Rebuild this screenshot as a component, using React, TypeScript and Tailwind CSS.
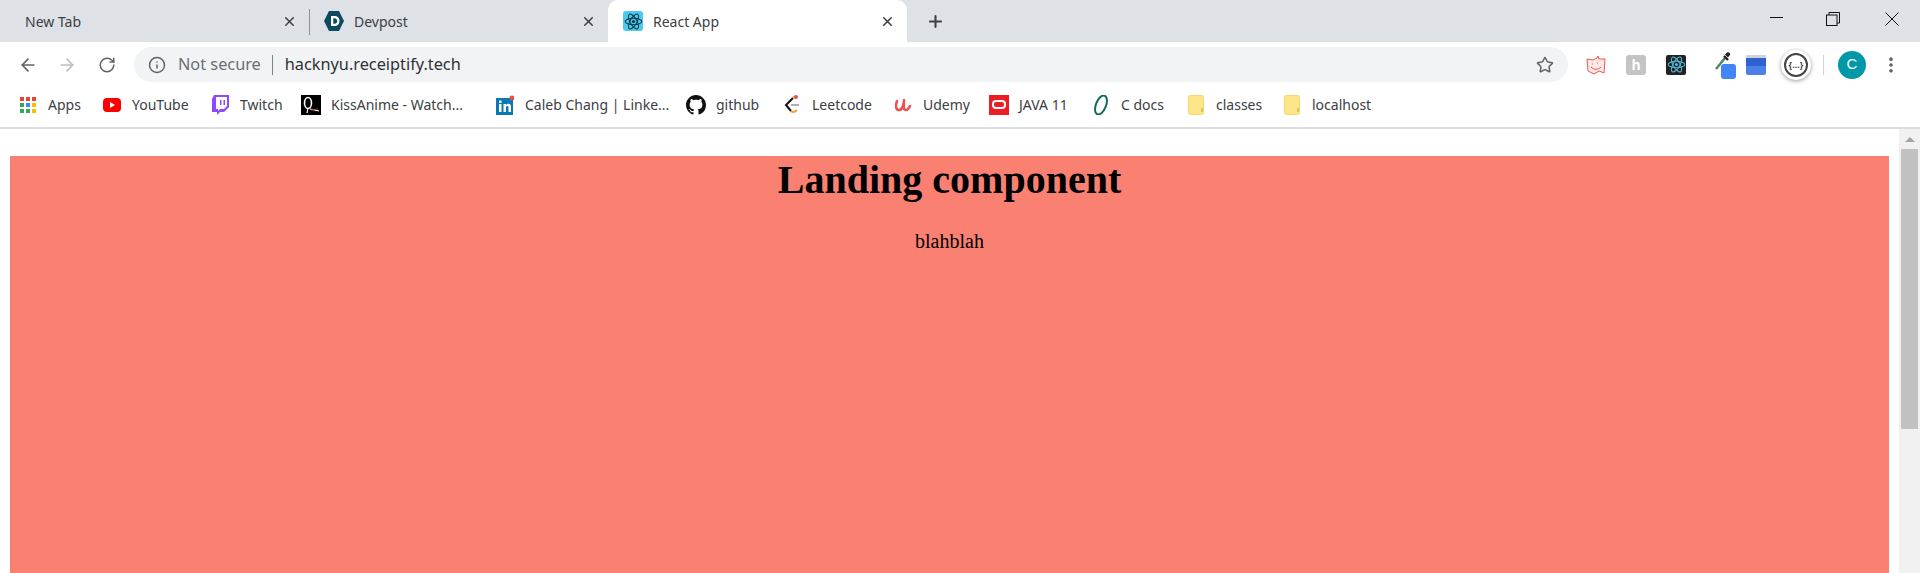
import { ArrowLeft, ArrowRight, Info, MoreVertical, Plus, RotateCw, Star, X } from 'lucide-react';
import type { ReactNode } from 'react';

function ReactLogo({ color = '#61dafb', size = 20 }: { color?: string; size?: number }) {
  return (
    <svg width={size} height={size} viewBox="0 0 24 24" fill="none" stroke={color} strokeWidth={1.3}>
      <circle cx="12" cy="12" r="2" fill={color} stroke="none" />
      <ellipse cx="12" cy="12" rx="10.5" ry="4.2" />
      <ellipse cx="12" cy="12" rx="10.5" ry="4.2" transform="rotate(60 12 12)" />
      <ellipse cx="12" cy="12" rx="10.5" ry="4.2" transform="rotate(120 12 12)" />
    </svg>
  );
}

function AppsIcon() {
  const colors = ['#ea4335', '#ea4335', '#ea4335', '#34a853', '#4285f4', '#fbbc05', '#34a853', '#34a853', '#fbbc05'];
  return (
    <div className="grid grid-cols-3 gap-[2px] w-[16px]">
      {colors.map((c, i) => (
        <span key={i} className="w-[4px] h-[4px]" style={{ backgroundColor: c }} />
      ))}
    </div>
  );
}

function Folder() {
  return (
    <svg width="16" height="20" viewBox="0 0 16 20">
      <rect x="0.5" y="0.5" width="15" height="19" rx="2" fill="#fde68a" stroke="#f5d76e" />
      <rect x="13" y="13" width="2" height="4" fill="#e8c552" />
    </svg>
  );
}

const bookmarks: { label: string; width: string; icon: ReactNode }[] = [
  { label: 'Apps', width: 'w-[84px]', icon: <AppsIcon /> },
  {
    label: 'YouTube',
    width: 'w-[108px]',
    icon: (
      <svg width="18" height="14" viewBox="0 0 18 14">
        <rect width="18" height="14" rx="4" fill="#ff0000" />
        <path d="M7 4l5 3-5 3z" fill="#fff" />
      </svg>
    ),
  },
  {
    label: 'Twitch',
    width: 'w-[91px]',
    icon: (
      <svg width="18" height="20" viewBox="0 0 18 20">
        <path d="M3 0h15v12l-5 5H9l-3 3v-3H1V4z" fill="#9146ff" />
        <path d="M5 2h11v9l-3 3H9l-2 2v-2H5z" fill="#fff" />
        <path d="M9 5h1.5v5H9zM12.5 5H14v5h-1.5z" fill="#9146ff" />
      </svg>
    ),
  },
  {
    label: 'KissAnime - Watch...',
    width: 'w-[194px]',
    icon: (
      <svg width="20" height="20" viewBox="0 0 20 20">
        <rect width="20" height="20" fill="#000" />
        <ellipse cx="7" cy="8" rx="3.5" ry="5.5" fill="none" stroke="#fff" strokeWidth="1.6" />
        <path d="M7 13l-1 5M9 14l9 2" stroke="#fff" strokeWidth="1.2" />
        <path d="M10 15l7-1" stroke="#c0392b" strokeWidth="1" />
      </svg>
    ),
  },
  {
    label: 'Caleb Chang | Linke...',
    width: 'w-[191px]',
    icon: (
      <svg width="18" height="20" viewBox="0 0 18 20">
        <rect y="3" width="17" height="17" fill="#0a78b5" />
        <circle cx="16" cy="3" r="2.5" fill="#e8503a" />
        <path d="M3 9h2.5v8H3zM3 5.5h2.5V8H3zM7.5 9H10v1.2c.6-.9 1.400-1.400 2.500-1.400 2 0 2.500 1.400 2.500 3.400V17h-2.500v-4.300c0-1-.3-1.700-1.200-1.700-1 0-1.300.8-1.300 1.700V17H7.500z" fill="#fff" />
      </svg>
    ),
  },
  {
    label: 'github',
    width: 'w-[96px]',
    icon: (
      <svg width="20" height="20" viewBox="0 0 16 16" fill="#111">
        <path d="M8 0C3.580 0 0 3.580 0 8c0 3.540 2.290 6.530 5.470 7.590.4.070.55-.17.55-.38 0-.19-.01-.82-.01-1.490-2.010.37-2.530-.49-2.690-.94-.09-.23-.48-.94-.82-1.130-.28-.15-.68-.52-.01-.53.630-.01 1.080.58 1.230.82.720 1.210 1.870.87 2.330.66.070-.52.280-.87.510-1.070-1.780-.2-3.640-.89-3.640-3.950 0-.87.310-1.590.820-2.150-.08-.2-.36-1.020.08-2.120 0 0 .67-.21 2.200.82.640-.18 1.320-.27 2-.27s1.360.09 2 .27c1.530-1.040 2.200-.82 2.200-.82.440 1.100.16 1.920.08 2.120.51.560.82 1.270.82 2.150 0 3.070-1.870 3.750-3.650 3.950.29.250.54.730.54 1.480 0 1.070-.01 1.930-.01 2.200 0 .21.150.460.550.380A8.010 8.010 0 0 0 16 8c0-4.420-3.580-8-8-8z" />
      </svg>
    ),
  },
  {
    label: 'Leetcode',
    width: 'w-[111px]',
    icon: (
      <svg width="18" height="20" viewBox="0 0 18 20" fill="none" strokeWidth="2">
        <path d="M10 3L3 10l5 6" stroke="#111" />
        <path d="M8 16c2 2 4 1 6-1" stroke="#f0a030" />
        <path d="M8 10h8" stroke="#b0b0b0" />
        <path d="M10 3l2-2" stroke="#f0a030" />
        <circle cx="13" cy="2" r="2" fill="#d9534f" stroke="none" />
      </svg>
    ),
  },
  {
    label: 'Udemy',
    width: 'w-[96px]',
    icon: (
      <svg width="18" height="18" viewBox="0 0 18 18" fill="none" stroke="#ec5252" strokeWidth="2.6" strokeLinecap="round">
        <path d="M3 5c-2 5-1 9 2 9s5-5 5-10" />
        <path d="M10 8c-1 4 0 6 2 6s3-2 4-4" />
      </svg>
    ),
  },
  {
    label: 'JAVA 11',
    width: 'w-[102px]',
    icon: (
      <div className="w-[20px] h-[20px] bg-[#ed1c24] flex items-center justify-center">
        <div className="w-[14px] h-[9px] rounded-[4px] border-2 border-white" />
      </div>
    ),
  },
  {
    label: 'C docs',
    width: 'w-[95px]',
    icon: (
      <svg width="18" height="20" viewBox="0 0 18 20" fill="none">
        <ellipse cx="9" cy="10" rx="5" ry="10" transform="rotate(22 9 10)" stroke="#0f6b55" strokeWidth="2" />
      </svg>
    ),
  },
  { label: 'classes', width: 'w-[96px]', icon: <Folder /> },
  { label: 'localhost', width: 'w-[96px]', icon: <Folder /> },
];

export default function App() {
  return (
    <div className="h-[573px] w-[1920px] overflow-hidden bg-white flex flex-col font-['Open_Sans',sans-serif]">
      {/* tab strip */}
      <div className="h-[42px] bg-[#dee1e6] flex text-[14px] text-[#3c4043] shrink-0">
        <div className="w-[309px] flex items-center pl-[25px] pr-[12px]">
          <span className="flex-1 font-['Noto_Sans',sans-serif]">New Tab</span>
          <X size={15} strokeWidth={2.4} className="text-[#3c4043]" />
        </div>
        <div className="w-px h-[26px] mt-[9px] bg-[#8e9297]" />
        <div className="w-[298px] flex items-center pl-[14px] pr-[12px]">
          <svg width="20" height="22" viewBox="0 0 20 22" className="mr-[10px]">
            <path d="M5 1h10l5 10-5 10H5L0 11z" fill="#0b4a5f" />
            <path d="M7 6h3.500c3 0 5 2 5 5s-2 5-5 5H7zm2.300 2.200v5.600h1.200c1.700 0 2.700-1.100 2.700-2.800s-1-2.800-2.700-2.800z" fill="#fff" />
          </svg>
          <span className="flex-1 font-['Noto_Sans',sans-serif]">Devpost</span>
          <X size={15} strokeWidth={2.4} className="text-[#3c4043]" />
        </div>
        <div className="w-[299px] bg-white rounded-t-[10px] flex items-center pl-[15px] pr-[12px]">
          <div className="w-[20px] h-[20px] rounded-[3px] bg-[#4dc9ee] flex items-center justify-center mr-[10px]">
            <ReactLogo color="#0b3c4a" size={19} />
          </div>
          <span className="flex-1 font-['Noto_Sans',sans-serif]">React App</span>
          <X size={15} strokeWidth={2.4} className="text-[#3c4043]" />
        </div>
        <div className="ml-[19px] flex items-center">
          <Plus size={19} strokeWidth={2.6} className="text-[#3c4043]" />
        </div>
        {/* window buttons */}
        <div className="ml-auto flex items-start pt-[12px] text-black">
          <div className="w-[13px] h-px bg-[#111] mt-[5px] mr-[43px]" />
          <svg width="14" height="14" viewBox="0 0 14 14" fill="none" stroke="#111" strokeWidth="1" className="mr-[45px]">
            <rect x="0.5" y="3" width="10.500" height="10.500" />
            <path d="M3 3V0.500h10.500V11H11" />
          </svg>
          <svg width="14" height="14" viewBox="0 0 14 14" stroke="#111" strokeWidth="1" className="mr-[21px]">
            <path d="M0.500 0.500l13 13M13.500 0.500l-13 13" />
          </svg>
        </div>
      </div>

      {/* toolbar */}
      <div className="h-[40px] flex items-center pl-[18px] shrink-0 pt-[5px]">
        <ArrowLeft size={20} strokeWidth={2} className="text-[#5f6368]" />
        <ArrowRight size={20} strokeWidth={2} className="text-[#bcbfc3] ml-[19px]" />
        <RotateCw size={18} strokeWidth={2} className="text-[#5f6368] ml-[21px]" />
        <div className="ml-[18px] w-[1434px] h-[35px] rounded-full bg-[#f1f3f4] flex items-center pl-[14px] pr-[14px]">
          <Info size={18} strokeWidth={2} className="text-[#5f6368]" />
          <span className="ml-[12px] text-[16.3px] text-[#6b6f74] font-['Noto_Sans',sans-serif]">Not secure</span>
          <div className="w-px h-[20px] bg-[#7f8387] ml-[11px]" />
          <span className="ml-[12px] text-[16.3px] text-[#303134] font-['Noto_Sans',sans-serif]">hacknyu.receiptify.tech</span>
          <Star size={18} strokeWidth={2} className="ml-auto text-[#5f6368]" />
        </div>

        {/* extensions */}
        <div className="ml-[18px] w-[20px] h-[20px] flex items-center justify-center">
          <svg width="20" height="20" viewBox="0 0 20 20" fill="none" stroke="#e8594f" strokeWidth="1">
            <path d="M1 4l6 1 4-2 1-2 1 3 6 0-1 14-5-2-5 3-6-3z" fill="#fde8e6" />
            <path d="M6 9h1M11 8h1M5 12c3 3 7 3 10 0" />
          </svg>
        </div>
        <div className="ml-[20px] w-[20px] h-[20px] rounded-[3px] bg-[#c4c4c4] flex items-center justify-center text-white text-[14px] font-bold leading-none">
          h
        </div>
        <div className="ml-[20px] w-[20px] h-[20px] rounded-[2px] bg-[#222] flex items-center justify-center">
          <ReactLogo color="#53b9dc" size={19} />
        </div>
        <div className="ml-[28px] w-[24px] h-[28px] relative">
          <svg width="18" height="20" viewBox="0 0 18 20" fill="none">
            <path d="M2 18L11 7" stroke="#4b8a5e" strokeWidth="2.4" />
            <path d="M10 5l4 4" stroke="#222" strokeWidth="2.4" />
            <path d="M13 1.500c2-1 3.500.5 3 2.500l-2 2.500-3-3z" fill="#222" />
          </svg>
          <div className="absolute left-[7px] top-[13px] w-[15px] h-[15px] rounded-[3px] bg-[#4285f4]" />
        </div>
        <div className="ml-[8px] w-[20px] h-[20px] rounded-[2px] bg-[#4c80e8] flex flex-col">
          <div className="h-[3px] bg-[#cfd3da]" />
          <div className="h-[8px] bg-[#2f62d0]" />
        </div>
        <div className="ml-[15px] w-[30px] h-[30px] rounded-full bg-white shadow-[0_1px_4px_rgba(0,0,0,0.4)] flex items-center justify-center">
          <div className="w-[24px] h-[24px] rounded-full border-2 border-[#444] flex items-center justify-center text-[9px] text-[#444] leading-none font-bold">
            {'{...}'}
          </div>
        </div>
        <div className="ml-[12px] w-px h-[20px] bg-[#cfd1d4]" />
        <div className="ml-[14px] w-[28px] h-[28px] rounded-full bg-[#0097a7] flex items-center justify-center text-white text-[15px] font-['Liberation_Sans',sans-serif]">
          C
        </div>
        <MoreVertical size={20} strokeWidth={2.4} className="text-[#5f6368] ml-[15px]" />
      </div>

      {/* bookmarks */}
      <div className="h-[45px] flex items-center pl-[18px] shrink-0 text-[14px] text-[#3c4043] border-b-2 border-[#dcdde0] box-content">
        {bookmarks.map((b) => (
          <div key={b.label} className={`${b.width} flex items-center gap-[10px] shrink-0`}>
            <div className="w-[20px] flex items-center justify-center shrink-0">{b.icon}</div>
            <span className="whitespace-nowrap font-['Noto_Sans',sans-serif]">{b.label}</span>
          </div>
        ))}
      </div>

      {/* page */}
      <div className="flex-1 flex min-h-0">
        <div className="flex-1 pl-[10px] pr-[10px] pt-[27px] min-h-0">
          <div className="h-full bg-[#fa8072] text-black text-center font-['Liberation_Serif',serif] text-[20px] pt-px">
            <h1 className="text-[40px] font-bold leading-[46px]">Landing component</h1>
            <p className="mt-[27px] leading-[23px]">blahblah</p>
          </div>
        </div>
        <div className="w-[21px] bg-[#f1f1f1] flex flex-col items-center pt-[8px]">
          <div className="w-0 h-0 border-x-[5px] border-x-transparent border-b-[5px] border-b-[#a3a3a3]" />
          <div className="mt-[7px] w-[17px] h-[280px] bg-[#c1c1c1]" />
        </div>
      </div>
    </div>
  );
}
